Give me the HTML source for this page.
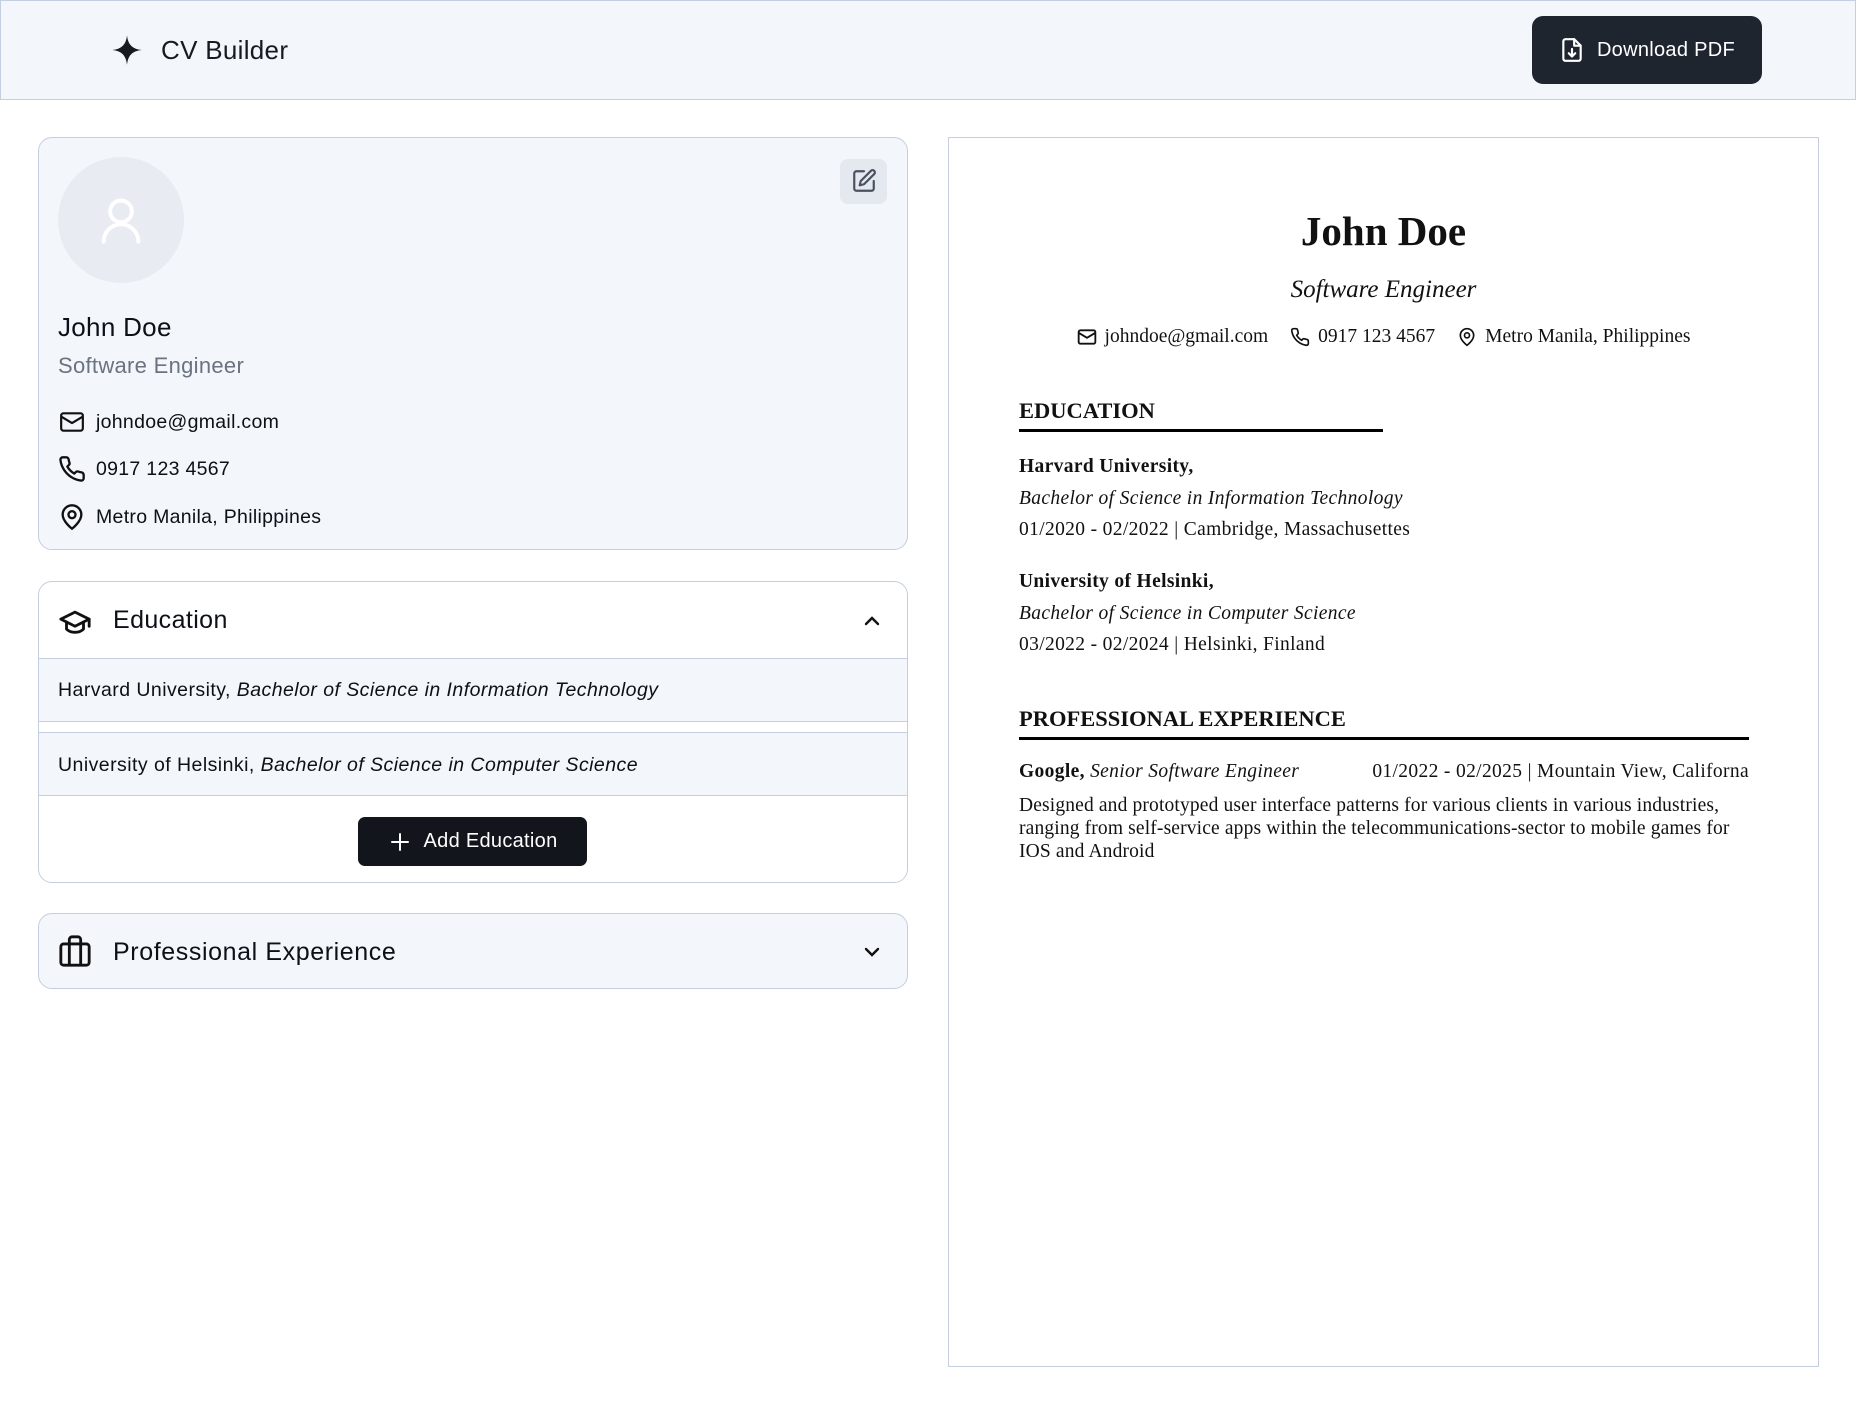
<!DOCTYPE html>
<html><head><meta charset="utf-8">
<style>
*{box-sizing:border-box;margin:0;padding:0}
body{width:1856px;height:1403px;background:#fff;font-family:"Liberation Sans",sans-serif;color:#0d1117;position:relative;overflow:hidden}
.a{position:absolute}
.hdr{left:0;top:0;width:1856px;height:100px;background:#f3f6fb;border:1px solid #c5cee0}
.btn{background:#1e252f;color:#fff;border-radius:11px;display:flex;align-items:center;justify-content:center;gap:12px;font-size:20px;letter-spacing:0.3px}
.card{border:1px solid #c5cee0;border-radius:14px;overflow:hidden}
.row{display:flex;align-items:center;gap:10px;font-size:19.5px;left:58px;letter-spacing:0.3px}
.ser{font-family:"Liberation Serif",serif;color:#111}
.ls{letter-spacing:0.35px}
svg{display:block}
</style></head><body>
<div class="a hdr"></div>
<svg class="a" style="left:111px;top:34px" width="32" height="32" viewBox="0 0 24 24"><path d="M12 1 C12.8 8 16 11.2 23 12 C16 12.8 12.8 16 12 23 C11.2 16 8 12.8 1 12 C8 11.2 11.2 8 12 1Z" fill="#161b22"/></svg>
<div class="a" style="left:161px;top:35px;font-size:26px;color:#161b22;letter-spacing:0.3px">CV Builder</div>
<div class="a btn" style="left:1532px;top:16px;width:230px;height:68px">
<svg width="26" height="28" viewBox="0 0 24 24" fill="none" stroke="#fff" stroke-width="2" stroke-linecap="round" stroke-linejoin="round"><path d="M14 2H6a2 2 0 0 0-2 2v16a2 2 0 0 0 2 2h12a2 2 0 0 0 2-2V8z"/><path d="M14 2v6h6"/><path d="M12 11v7M9 15l3 3 3-3"/></svg>
<span>Download PDF</span></div>

<!-- profile card -->
<div class="a card" style="left:38px;top:137px;width:870px;height:413px;background:#f3f6fb"></div>
<div class="a" style="left:58px;top:157px;width:126px;height:126px;border-radius:50%;background:#e8ecf2"></div>
<svg class="a" style="left:95px;top:192px" width="52" height="56" viewBox="0 0 24 24" fill="none" stroke="#fff" stroke-width="1.8" stroke-linecap="round"><circle cx="12" cy="8" r="5"/><path d="M4 22a8 8 0 0 1 16 0"/></svg>
<div class="a" style="left:840px;top:159px;width:47px;height:45px;border-radius:8px;background:#e4e8ef"></div>
<svg class="a" style="left:851px;top:168px" width="26" height="26" viewBox="0 0 24 24" fill="none" stroke="#4b5160" stroke-width="2" stroke-linecap="round" stroke-linejoin="round"><path d="M12 3H5a2 2 0 0 0-2 2v14a2 2 0 0 0 2 2h14a2 2 0 0 0 2-2v-7"/><path d="M18.4 2.6a2.1 2.1 0 0 1 3 3L12 15l-4 1 1-4z"/></svg>
<div class="a" style="left:58px;top:312px;font-size:26px;letter-spacing:0.3px">John Doe</div>
<div class="a" style="left:58px;top:353px;font-size:22px;color:#6b7280;letter-spacing:0.3px">Software Engineer</div>
<div class="a row" style="top:409px"><svg width="28" height="26" viewBox="0 0 24 24" fill="none" stroke="#111" stroke-width="2" stroke-linejoin="round"><rect x="2" y="4" width="20" height="16" rx="2"/><path d="M2 7l10 6 10-6"/></svg><span>johndoe@gmail.com</span></div>
<div class="a row" style="top:455px"><svg width="28" height="28" viewBox="0 0 24 24" fill="none" stroke="#111" stroke-width="2" stroke-linejoin="round"><path d="M22 16.9v3a2 2 0 0 1-2.2 2 19.8 19.8 0 0 1-8.6-3.1 19.5 19.5 0 0 1-6-6A19.8 19.8 0 0 1 2.1 4.2 2 2 0 0 1 4.1 2h3a2 2 0 0 1 2 1.7c.1 1 .4 1.9.7 2.8a2 2 0 0 1-.5 2.1L8 9.9a16 16 0 0 0 6 6l1.3-1.3a2 2 0 0 1 2.1-.4c.9.3 1.8.6 2.8.7a2 2 0 0 1 1.7 2z"/></svg><span>0917 123 4567</span></div>
<div class="a row" style="top:503px"><svg width="28" height="28" viewBox="0 0 24 24" fill="none" stroke="#111" stroke-width="2"><path d="M20 10c0 6-8 12-8 12s-8-6-8-12a8 8 0 0 1 16 0Z"/><circle cx="12" cy="10" r="3"/></svg><span>Metro Manila, Philippines</span></div>

<!-- education card -->
<div class="a card" style="left:38px;top:581px;width:870px;height:302px;background:#fff">
 <div class="a" style="left:0;top:76px;width:870px;height:64px;background:#f3f6fb;border-top:1px solid #c5cee0;border-bottom:1px solid #c5cee0"></div>
 <div class="a" style="left:0;top:150px;width:870px;height:64px;background:#f3f6fb;border-top:1px solid #c5cee0;border-bottom:1px solid #c5cee0"></div>
</div>
<svg class="a" style="left:58px;top:605px" width="34" height="34" viewBox="0 0 24 24" fill="none" stroke="#111" stroke-width="2" stroke-linejoin="round" stroke-linecap="round"><path d="M22 10L12 5 2 10l10 5 10-5z"/><path d="M6 12v5c3 3 9 3 12 0v-5"/><path d="M22 10v5"/></svg>
<div class="a" style="left:113px;top:606px;font-size:25px;letter-spacing:0.4px">Education</div>
<svg class="a" style="left:860px;top:609px" width="24" height="24" viewBox="0 0 24 24" fill="none" stroke="#111" stroke-width="2.4" stroke-linecap="round"><path d="M6 15l6-6 6 6"/></svg>
<div class="a" style="left:58px;top:679px;font-size:19.5px;letter-spacing:0.45px">Harvard University, <i>Bachelor of Science in Information Technology</i></div>
<div class="a" style="left:58px;top:754px;font-size:19.5px;letter-spacing:0.45px">University of Helsinki, <i>Bachelor of Science in Computer Science</i></div>
<div class="a btn" style="left:358px;top:817px;width:229px;height:49px;border-radius:7px;background:#12161c">
<svg width="24" height="24" viewBox="0 0 24 24" fill="none" stroke="#fff" stroke-width="2" stroke-linecap="round"><path d="M12 4v16M4 12h16"/></svg><span>Add Education</span></div>

<!-- prof card -->
<div class="a card" style="left:38px;top:913px;width:870px;height:76px;background:#f3f6fb"></div>
<svg class="a" style="left:58px;top:934px" width="34" height="34" viewBox="0 0 24 24" fill="none" stroke="#111" stroke-width="2" stroke-linejoin="round"><rect x="2" y="7" width="20" height="15" rx="2"/><path d="M16 22V4a2 2 0 0 0-2-2h-4a2 2 0 0 0-2 2v18"/></svg>
<div class="a" style="left:113px;top:938px;font-size:25px;letter-spacing:0.6px">Professional Experience</div>
<svg class="a" style="left:860px;top:940px" width="24" height="24" viewBox="0 0 24 24" fill="none" stroke="#111" stroke-width="2.4" stroke-linecap="round"><path d="M6 9l6 6 6-6"/></svg>

<!-- preview -->
<div class="a" style="left:948px;top:137px;width:871px;height:1230px;border:1px solid #c5cee0;background:#fff"></div>
<div class="a ser" style="left:948px;width:871px;top:207px;text-align:center;font-size:41px;font-weight:bold">John Doe</div>
<div class="a ser" style="left:948px;width:871px;top:276px;text-align:center;font-size:25px;font-style:italic">Software Engineer</div>
<div class="a ser" style="left:948px;width:871px;top:326px;display:flex;justify-content:center;align-items:center;gap:8px;font-size:19.5px">
<svg width="20" height="20" viewBox="0 0 24 24" fill="none" stroke="#111" stroke-width="2.2" stroke-linejoin="round"><rect x="2" y="4" width="20" height="16" rx="2"/><path d="M2 7l10 6 10-6"/></svg><span>johndoe@gmail.com</span><span style="width:6px"></span>
<svg width="20" height="20" viewBox="0 0 24 24" fill="none" stroke="#111" stroke-width="2" stroke-linejoin="round"><path d="M22 16.9v3a2 2 0 0 1-2.2 2 19.8 19.8 0 0 1-8.6-3.1 19.5 19.5 0 0 1-6-6A19.8 19.8 0 0 1 2.1 4.2 2 2 0 0 1 4.1 2h3a2 2 0 0 1 2 1.7c.1 1 .4 1.9.7 2.8a2 2 0 0 1-.5 2.1L8 9.9a16 16 0 0 0 6 6l1.3-1.3a2 2 0 0 1 2.1-.4c.9.3 1.8.6 2.8.7a2 2 0 0 1 1.7 2z"/></svg><span>0917 123 4567</span><span style="width:6px"></span>
<svg width="20" height="20" viewBox="0 0 24 24" fill="none" stroke="#111" stroke-width="2"><path d="M20 10c0 6-8 12-8 12s-8-6-8-12a8 8 0 0 1 16 0Z"/><circle cx="12" cy="10" r="3"/></svg><span>Metro Manila, Philippines</span></div>

<div class="a ser" style="left:1019px;top:398px;font-size:22.5px;font-weight:bold">EDUCATION</div>
<div class="a" style="left:1019px;top:429px;width:364px;height:3px;background:#000"></div>
<div class="a ser ls" style="left:1019px;top:451px;font-size:19.5px;line-height:31.5px">
<b>Harvard University,</b><br><i>Bachelor of Science in Information Technology</i><br>01/2020 - 02/2022 | Cambridge, Massachusettes</div>
<div class="a ser ls" style="left:1019px;top:566px;font-size:19.5px;line-height:31.5px">
<b>University of Helsinki,</b><br><i>Bachelor of Science in Computer Science</i><br>03/2022 - 02/2024 | Helsinki, Finland</div>

<div class="a ser" style="left:1019px;top:706px;font-size:22.5px;font-weight:bold">PROFESSIONAL EXPERIENCE</div>
<div class="a" style="left:1019px;top:737px;width:730px;height:3px;background:#000"></div>
<div class="a ser" style="left:1019px;top:761px;width:730px;font-size:19.5px;display:flex;justify-content:space-between"><span class="ls"><b>Google,</b> <i>Senior Software Engineer</i></span><span class="ls">01/2022 - 02/2025 | Mountain View, Californa</span></div>
<div class="a ser" style="left:1019px;top:794px;width:735px;font-size:19.5px;line-height:23px;letter-spacing:0.15px">Designed and prototyped user interface patterns for various clients in various industries, ranging from self-service apps within the telecommunications-sector to mobile games for IOS and Android</div>
</body></html>
